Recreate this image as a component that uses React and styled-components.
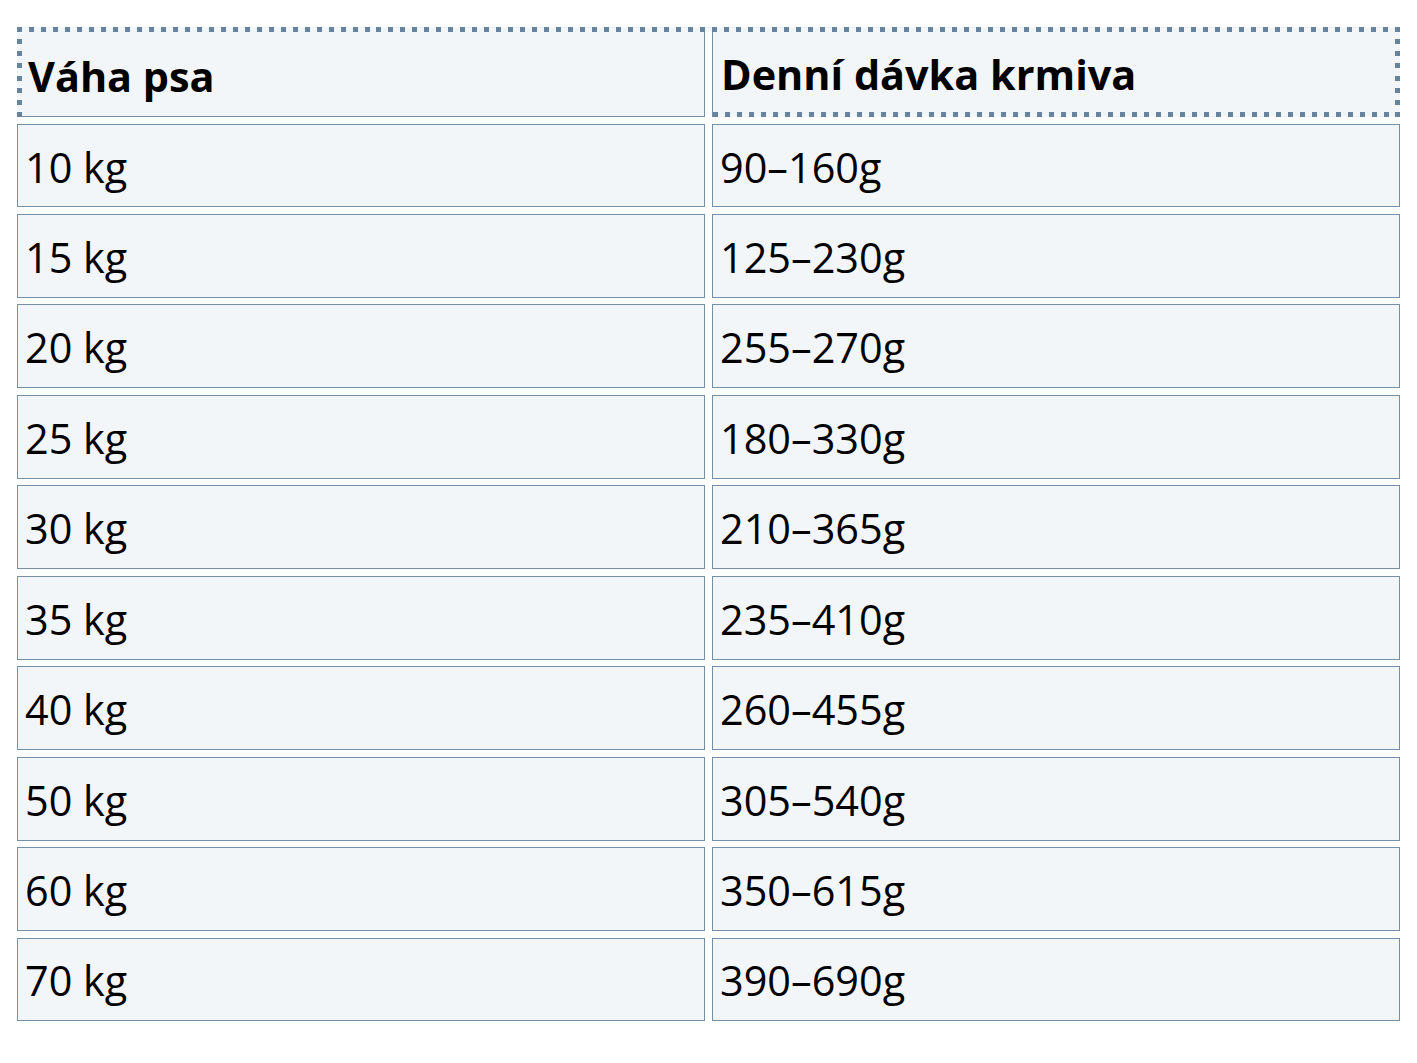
import React from 'react'
import styled, { createGlobalStyle } from 'styled-components'

const rows = [
    ['10 kg', '90–160g'],
    ['15 kg', '125–230g'],
    ['20 kg', '255–270g'],
    ['25 kg', '180–330g'],
    ['30 kg', '210–365g'],
    ['35 kg', '235–410g'],
    ['40 kg', '260–455g'],
    ['50 kg', '305–540g'],
    ['60 kg', '350–615g'],
    ['70 kg', '390–690g'],
]

const dot = '#66849e'
const line = '#7490a8'
const cellBg = '#f3f6f8'

// square dots along an edge, spaced so that the corners land on a dot
const dotsX = `repeating-linear-gradient(to right, ${dot} 0 5px, ${cellBg} 5px 11.983px)`
const dotsY = `repeating-linear-gradient(to bottom, ${dot} 0 5px, ${cellBg} 5px 12.14px)`

const GlobalStyle = createGlobalStyle`
    html, body {
        margin: 0;
        background: #ffffff;
    }
    body {
        font-family: "Open Sans", "Noto Sans", sans-serif;
        color: #000000;
    }
`

const Page = styled.div`
    padding: 27px 17px;
`

const Table = styled.div`
    display: flex;
    flex-direction: column;
    gap: 6.6px;
`

const HeadRow = styled.div`
    display: grid;
    grid-template-columns: 1fr 1fr;
    column-gap: 7px;
    height: 90px;
    box-sizing: border-box;
    padding: 5px 5px 0;
    background:
        ${dotsX} top left / 100% 5px no-repeat,
        ${dotsY} top left / 5px 100% no-repeat,
        ${dotsY} top right / 5px 100% no-repeat;
`

const HeadCell = styled.div`
    display: flex;
    align-items: center;
    box-sizing: border-box;
    padding: 3px 0 0 ${p => p.$last ? '8px' : '6px'};
    background: ${cellBg};
    font-size: 41.4px;
    font-weight: 700;
    border-bottom: 1px solid ${line};
    border-right: 1px solid ${line};
    &:last-child {
        border-right: none;
        border-bottom: none;
        border-left: 1px solid ${line};
        padding-bottom: 5px;
        background: ${dotsX} bottom left / 100% 5px no-repeat, ${cellBg};
    }
`

const Row = styled.div`
    display: grid;
    grid-template-columns: 1fr 1fr;
    column-gap: 7px;
`

const Cell = styled.div`
    display: flex;
    align-items: center;
    box-sizing: border-box;
    height: 83.85px;
    padding: 2px 0 0 7px;
    background: ${cellBg};
    border: 1px solid ${line};
    font-size: 41.4px;
    font-weight: 400;
`

const App = () => {
    return (
        <Page>
            <GlobalStyle />
            <Table>
                <HeadRow>
                    <HeadCell>Váha psa</HeadCell>
                    <HeadCell $last>Denní dávka krmiva</HeadCell>
                </HeadRow>
                {rows.map(([weight, dose]) => (
                    <Row key={weight}>
                        <Cell>{weight}</Cell>
                        <Cell>{dose}</Cell>
                    </Row>
                ))}
            </Table>
        </Page>
    )
}

export default App
